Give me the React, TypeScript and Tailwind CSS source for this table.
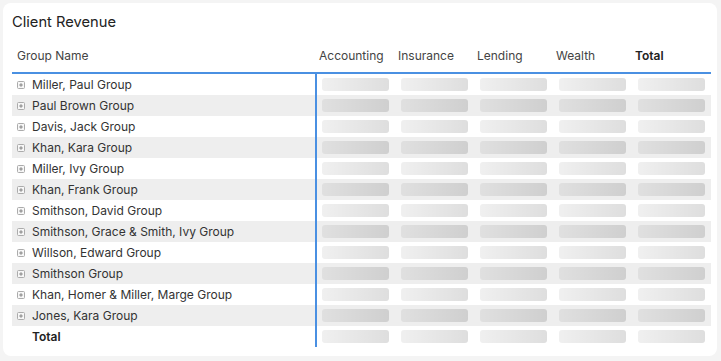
const groups = [
  'Miller, Paul Group',
  'Paul Brown Group',
  'Davis, Jack Group',
  'Khan, Kara Group',
  'Miller, Ivy Group',
  'Khan, Frank Group',
  'Smithson, David Group',
  'Smithson, Grace & Smith, Ivy Group',
  'Willson, Edward Group',
  'Smithson Group',
  'Khan, Homer & Miller, Marge Group',
  'Jones, Kara Group',
];

const columns = ['Accounting', 'Insurance', 'Lending', 'Wealth', 'Total'];

function ExpandIcon() {
  return (
    <svg width="8" height="8" viewBox="0 0 8 8" className="shrink-0">
      <rect x="0.5" y="0.5" width="7" height="7" rx="1" fill="#f7f7f7" stroke="#ababab" strokeWidth="1" />
      <path d="M2.2 4h3.6M4 2.2v3.6" stroke="#7a7a7a" strokeWidth="0.9" />
    </svg>
  );
}

function Skeleton() {
  return (
    <div className="flex items-center pl-[5px]">
      <div className="h-[13px] w-[67px] rounded-[3px] bg-gradient-to-r from-black/[0.06] to-black/[0.13]" />
    </div>
  );
}

function Row({ name, striped, total }: { name: string; striped: boolean; total?: boolean }) {
  return (
    <div className={`grid h-[21px] grid-cols-[305px_repeat(5,79px)] ${striped ? 'bg-[#eeeeee]' : ''}`}>
      <div className="flex items-center gap-[7px] border-r-2 border-[#4a90e2] pl-[5px]">
        {total ? <span className="w-[8px]" /> : <ExpandIcon />}
        <span className={total ? 'font-semibold text-[#222]' : 'text-[#333]'}>{name}</span>
      </div>
      {columns.map((c) => (
        <Skeleton key={c} />
      ))}
    </div>
  );
}

export default function App() {
  return (
    <div
      className="h-[361px] w-[721px] bg-[#f4f4f4] p-[3px]"
      style={{ fontFamily: 'Inter, "Noto Sans", sans-serif' }}
    >
      <div className="h-[353px] w-[714px] rounded-lg bg-white pb-[9px] pl-[9px] pr-[6px] pt-[9px]">
        <h1 className="text-[14.7px] leading-5 text-[#222]">Client Revenue</h1>

        <div className="text-[12px]">
          <div className="grid h-[42px] grid-cols-[305px_repeat(5,79px)] border-b-2 border-[#4a90e2] pt-[8px] text-[#444]">
            <div className="flex items-center pl-[5px]">Group Name</div>
            {columns.map((c) => (
              <div key={c} className={`flex items-center pl-[2px] ${c === 'Total' ? 'font-semibold text-[#222]' : ''}`}>
                {c}
              </div>
            ))}
          </div>

          {groups.map((g, i) => (
            <Row key={g} name={g} striped={i % 2 === 1} />
          ))}
          <Row name="Total" striped={false} total />
        </div>
      </div>
    </div>
  );
}
